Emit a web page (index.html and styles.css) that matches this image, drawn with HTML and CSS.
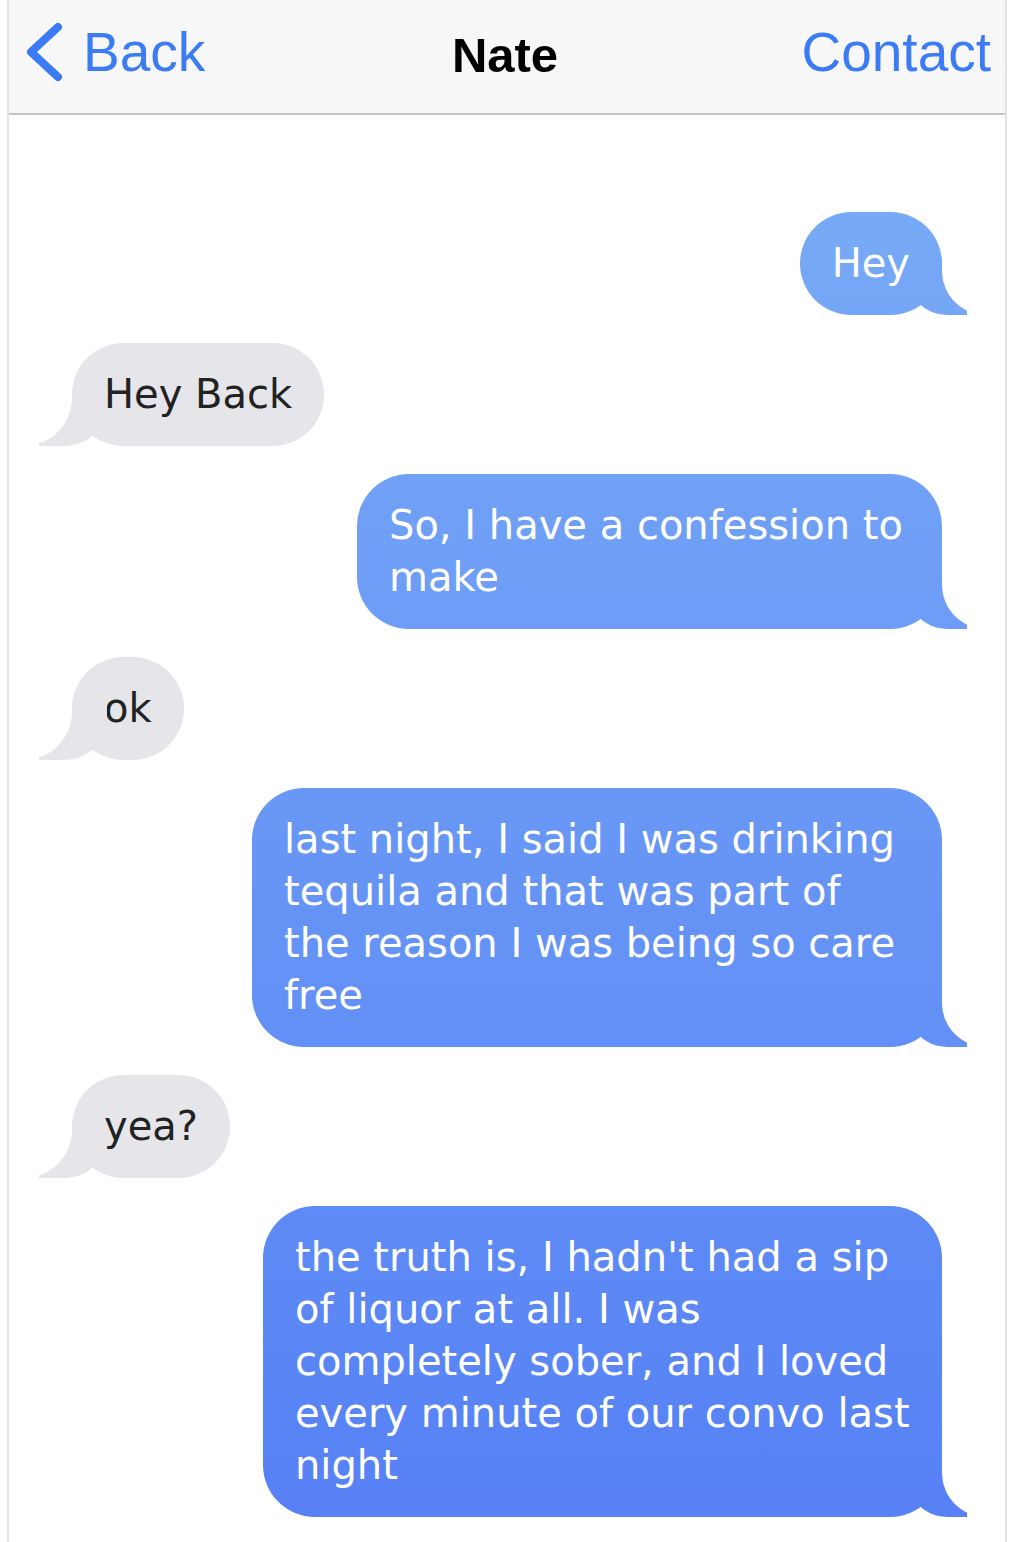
FILE: index.html
```html
<!DOCTYPE html>
<html lang="en">
  <head>
    <meta charset="UTF-8" />
    <meta name="viewport" content="width=device-width, initial-scale=1.0" />
    <title>Nate</title>
    <link rel="stylesheet" href="styles.css">
  </head>
  <body>
    <div class="screen">
      <div class="header">
        <a class="nav-back" href="#">
          <svg class="chevron" width="42" height="60" viewBox="0 0 42 60">
            <polyline points="35,5 8,30 35,55" fill="none" stroke="#3b7bf3" stroke-width="8" stroke-linecap="round" stroke-linejoin="round" />
          </svg>
          <span>Back</span>
        </a>
        <h1 class="title">Nate</h1>
        <a class="nav-contact" href="#">Contact</a>
      </div>

      <div class="thread">
        <div class="bubble sent">Hey</div>
        <div class="bubble received">Hey Back</div>
        <div class="bubble sent narrow">So, I have a confession to make</div>
        <div class="bubble received">ok</div>
        <div class="bubble sent">last night, I said I was drinking tequila and that was part of the reason I was being so care free</div>
        <div class="bubble received">yea?</div>
        <div class="bubble sent medium">the truth is, I hadn't had a sip of liquor at all. I was completely sober, and I loved every minute of our convo last night</div>
      </div>
    </div>
  </body>
</html>
```

FILE: styles.css
```css
body {
  margin: 0;
  padding: 0;
  background: #fff;
  font-family: "DejaVu Sans", Verdana, sans-serif;
}

.screen {
  margin-left: 7px;
  width: 1000px;
  min-height: 1542px;
  border-left: 2px solid #e3e3e3;
  border-right: 2px solid #e3e3e3;
  box-sizing: border-box;
}

.header {
  display: grid;
  grid-template-columns: 1fr auto 1fr;
  align-items: center;
  height: 115px;
  background-color: #f7f7f7;
  border-bottom: 2px solid #c4c4c4;
  font-family: "Liberation Sans", Arial, sans-serif;
  padding: 0 14px 10px 14px;
  box-sizing: border-box;
}

.nav-back {
  display: flex;
  align-items: center;
  gap: 18px;
  color: #3b7bf3;
  text-decoration: none;
  font-size: 55px;
}

.title {
  margin: 0;
  font-size: 49px;
  font-weight: bold;
  color: #000;
  padding-top: 6px;
  padding-right: 4px;
}

.nav-contact {
  justify-self: end;
  color: #3b7bf3;
  text-decoration: none;
  font-size: 55px;
}

.thread {
  display: flex;
  flex-direction: column;
  gap: 28px;
  padding: 97px 63px 40px 63px;
}

.bubble {
  position: relative;
  max-width: 626px;
  padding: 25px 32px 26px 32px;
  border-radius: 52px;
  font-size: 40px;
  line-height: 52px;
}

.narrow {
  max-width: 521px;
}

.medium {
  max-width: 615px;
}

.sent {
  align-self: flex-end;
  color: #fff;
  background: linear-gradient(to bottom, #7cb0f6 0%, #5680f5 100%) fixed;
}

.sent::before {
  content: "";
  position: absolute;
  z-index: 0;
  bottom: 0;
  right: -25px;
  width: 60px;
  height: 56px;
  background: linear-gradient(to bottom, #7cb0f6 0%, #5680f5 100%) fixed;
  border-bottom-left-radius: 40px;
}

.sent::after {
  content: "";
  position: absolute;
  z-index: 1;
  bottom: 0;
  right: -50px;
  width: 50px;
  height: 58px;
  background: #fff;
  border-bottom-left-radius: 44px;
}

.received {
  align-self: flex-start;
  color: #222;
  background: #e5e5ea;
}

.received::before {
  content: "";
  position: absolute;
  z-index: 0;
  bottom: 0;
  left: -33px;
  width: 68px;
  height: 56px;
  background: #e5e5ea;
  border-bottom-right-radius: 42px;
}

.received::after {
  content: "";
  position: absolute;
  z-index: 1;
  bottom: 0;
  left: -55px;
  width: 55px;
  height: 58px;
  background: #fff;
  border-bottom-right-radius: 48px;
}
```
